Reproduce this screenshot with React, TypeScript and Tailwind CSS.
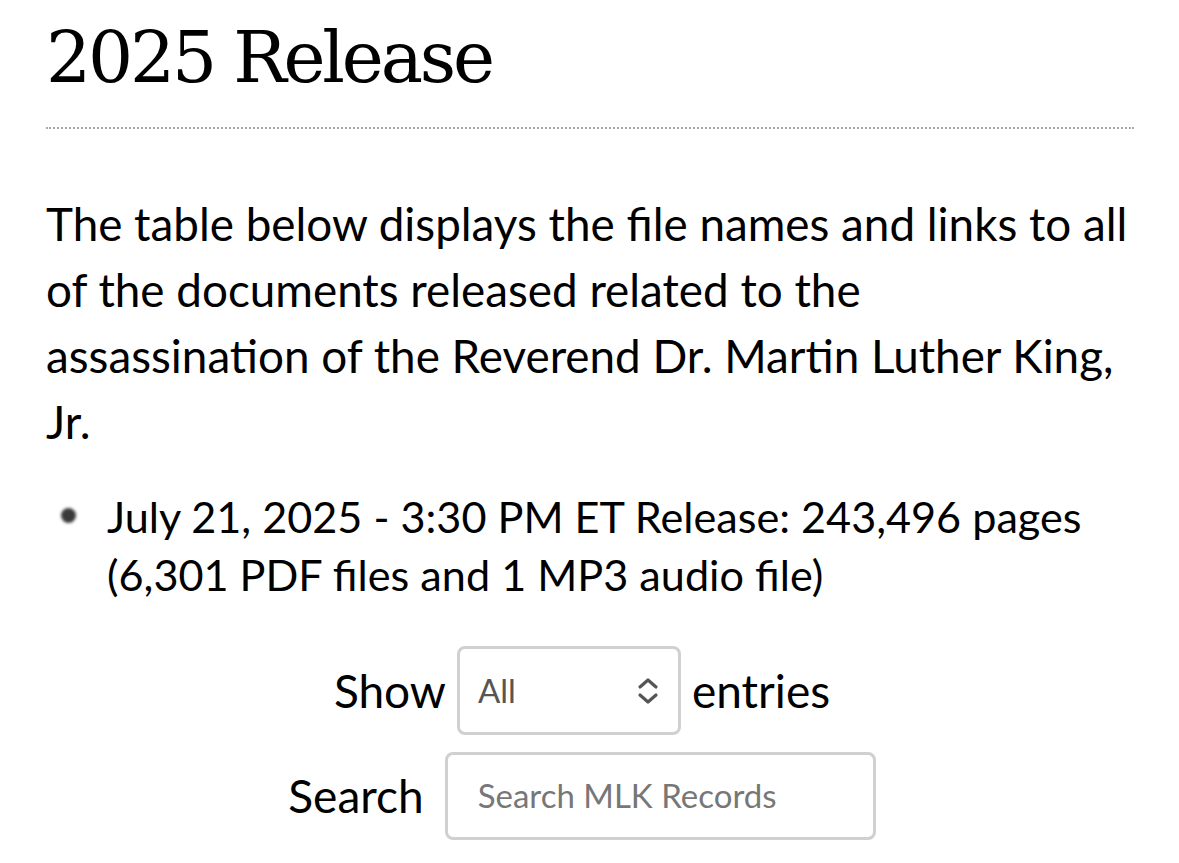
export default function App() {
  return (
    <div className="bg-white w-[1179px] h-[863px] overflow-hidden text-black">
      <div className="pl-[46px] pr-[45px] pt-[12px]">
        <h1 className="font-['DejaVu_Serif',serif] text-[71px] leading-[92px] tracking-[-3.2px]">2025 Release</h1>
        <div className="mt-[23px] border-t-[2px] border-dotted border-[#aaaaaa]" />
        <p className="mt-[62px] font-['Lato',sans-serif] text-[45.8px] leading-[66px]">
          The table below displays the file names and links to all<br />
          of the documents released related to the<br />
          assassination of the Reverend Dr. Martin Luther King,<br />
          Jr.
        </p>
        <div className="mt-[32px] flex font-['Lato',sans-serif] text-[43.2px] leading-[58px]">
          <div className="w-[61px] flex justify-start pt-[21px] pl-[15px]">
            <div className="w-[15px] h-[15px] rounded-full bg-[#3a3a3a] blur-[1.5px]" />
          </div>
          <div>
            July 21, 2025 - 3:30 PM ET Release: 243,496 pages<br />
            (6,301 PDF files and 1 MP3 audio file)
          </div>
        </div>
        <div className="mt-[43px] pr-[16px] flex flex-col items-center gap-[17px] font-['Lato',sans-serif]">
          <div className="flex items-center">
            <span className="text-[46px] leading-[60px] mr-[11px]">Show</span>
            <div className="w-[224px] h-[89px] shrink-0 border-[3px] border-[#d0d0d0] rounded-[8px] flex items-center justify-between pl-[18px] pr-[18px]">
              <span className="text-[33px] text-[#555]">All</span>
              <svg width="24" height="30" viewBox="0 0 24 30" fill="none" stroke="#555" strokeWidth="3.2" strokeLinecap="round" strokeLinejoin="round">
                <path d="M4 11 L12 4 L20 11" />
                <path d="M4 19 L12 26 L20 19" />
              </svg>
            </div>
            <span className="text-[46px] leading-[60px] ml-[11px]">entries</span>
          </div>
          <div className="flex items-center">
            <span className="text-[46px] leading-[60px] mr-[21px]">Search</span>
            <div className="w-[431px] h-[88px] shrink-0 border-[3px] border-[#d0d0d0] rounded-[8px] flex items-center pl-[30px]">
              <span className="text-[33px] text-[#777]">Search MLK Records</span>
            </div>
          </div>
        </div>
      </div>
    </div>
  );
}
